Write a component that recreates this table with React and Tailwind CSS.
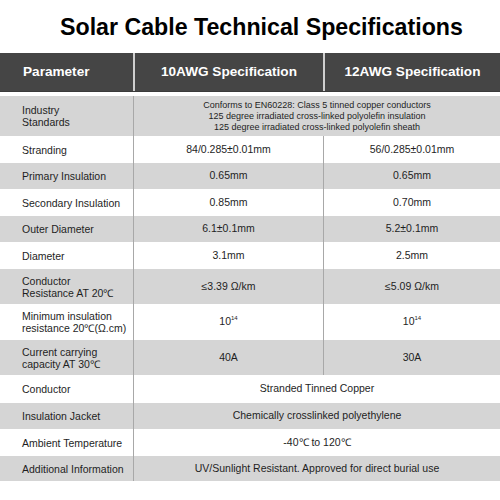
import React from 'react';

const rows = [
  { label: ['Industry', 'Standards'], span: ['Conforms to EN60228: Class 5 tinned copper conductors', '125 degree irradiated cross-linked polyolefin insulation', '125 degree irradiated cross-linked polyolefin sheath'], h: 'h-[40px]', small: true },
  { label: ['Stranding'], a: '84/0.285±0.01mm', b: '56/0.285±0.01mm', h: 'h-[27px]' },
  { label: ['Primary Insulation'], a: '0.65mm', b: '0.65mm', h: 'h-[26px]' },
  { label: ['Secondary Insulation'], a: '0.85mm', b: '0.70mm', h: 'h-[27px]' },
  { label: ['Outer Diameter'], a: '6.1±0.1mm', b: '5.2±0.1mm', h: 'h-[26px]' },
  { label: ['Diameter'], a: '3.1mm', b: '2.5mm', h: 'h-[27px]' },
  { label: ['Conductor', 'Resistance AT 20℃'], a: '≤3.39 Ω/km', b: '≤5.09 Ω/km', h: 'h-[35px]' },
  { label: ['Minimum insulation', 'resistance 20℃(Ω.cm)'], a: 'pow', b: 'pow', h: 'h-[36px]' },
  { label: ['Current carrying', 'capacity AT 30℃'], a: '40A', b: '30A', h: 'h-[35px]' },
  { label: ['Conductor'], span: ['Stranded Tinned Copper'], h: 'h-[28px]' },
  { label: ['Insulation Jacket'], span: ['Chemically crosslinked polyethylene'], h: 'h-[26px]' },
  { label: ['Ambient Temperature'], span: ['-40℃ to 120℃'], h: 'h-[27px]' },
  { label: ['Additional Information'], span: ['UV/Sunlight Resistant. Approved for direct burial use'], h: 'h-[25px]' },
];

const Value = ({ v }) =>
  v === 'pow' ? (
    <span>
      10<span className="text-[6px] align-top leading-[8px]">14</span>
    </span>
  ) : (
    <span>{v}</span>
  );

const App = () => {
  return (
    <div className="w-[500px] h-[500px] bg-white overflow-hidden" style={{ fontFamily: '"Liberation Sans", Arial, sans-serif' }}>
      <h1 className="h-[53px] pt-[12px] pl-[60px] text-[23.2px] font-bold text-black leading-[30px]">
        Solar Cable Technical Specifications
      </h1>

      {/* header */}
      <div className="grid grid-cols-[133px_190px_177px] h-[39px] bg-[#454545] text-white text-[13.6px] font-bold border-b border-[#3a3a3a]">
        <div className="flex items-center pl-[23px]">Parameter</div>
        <div className="flex items-center justify-center border-l-2 border-[#cfcfcf]">10AWG Specification</div>
        <div className="flex items-center justify-center border-l-2 border-[#cfcfcf]">12AWG Specification</div>
      </div>
      <div className="h-[4px]" />

      {/* body */}
      <div className="text-[10.5px] text-[#1e1e1e]">
        {rows.map((r, i) => (
          <div
            key={i}
            className={`grid grid-cols-[133px_190px_177px] ${r.h} ${i % 2 === 0 ? 'bg-[#d5d5d5]' : 'bg-white'}`}
          >
            <div className="flex flex-col justify-center pl-[22px] leading-[12px]">
              {r.label.map((l, j) => (
                <span key={j}>{l}</span>
              ))}
            </div>
            {r.span ? (
              <div className={`col-span-2 flex flex-col items-center justify-center border-l border-[#a8a8a8] ${r.small ? 'text-[9px] leading-[11px]' : ''}`}>
                {r.span.map((s, j) => (
                  <span key={j}>{s}</span>
                ))}
              </div>
            ) : (
              <>
                <div className="flex items-center justify-center border-l border-[#a8a8a8]">
                  <Value v={r.a} />
                </div>
                <div className="flex items-center justify-center border-l border-[#a8a8a8]">
                  <Value v={r.b} />
                </div>
              </>
            )}
          </div>
        ))}
      </div>
    </div>
  );
};

export default App;
